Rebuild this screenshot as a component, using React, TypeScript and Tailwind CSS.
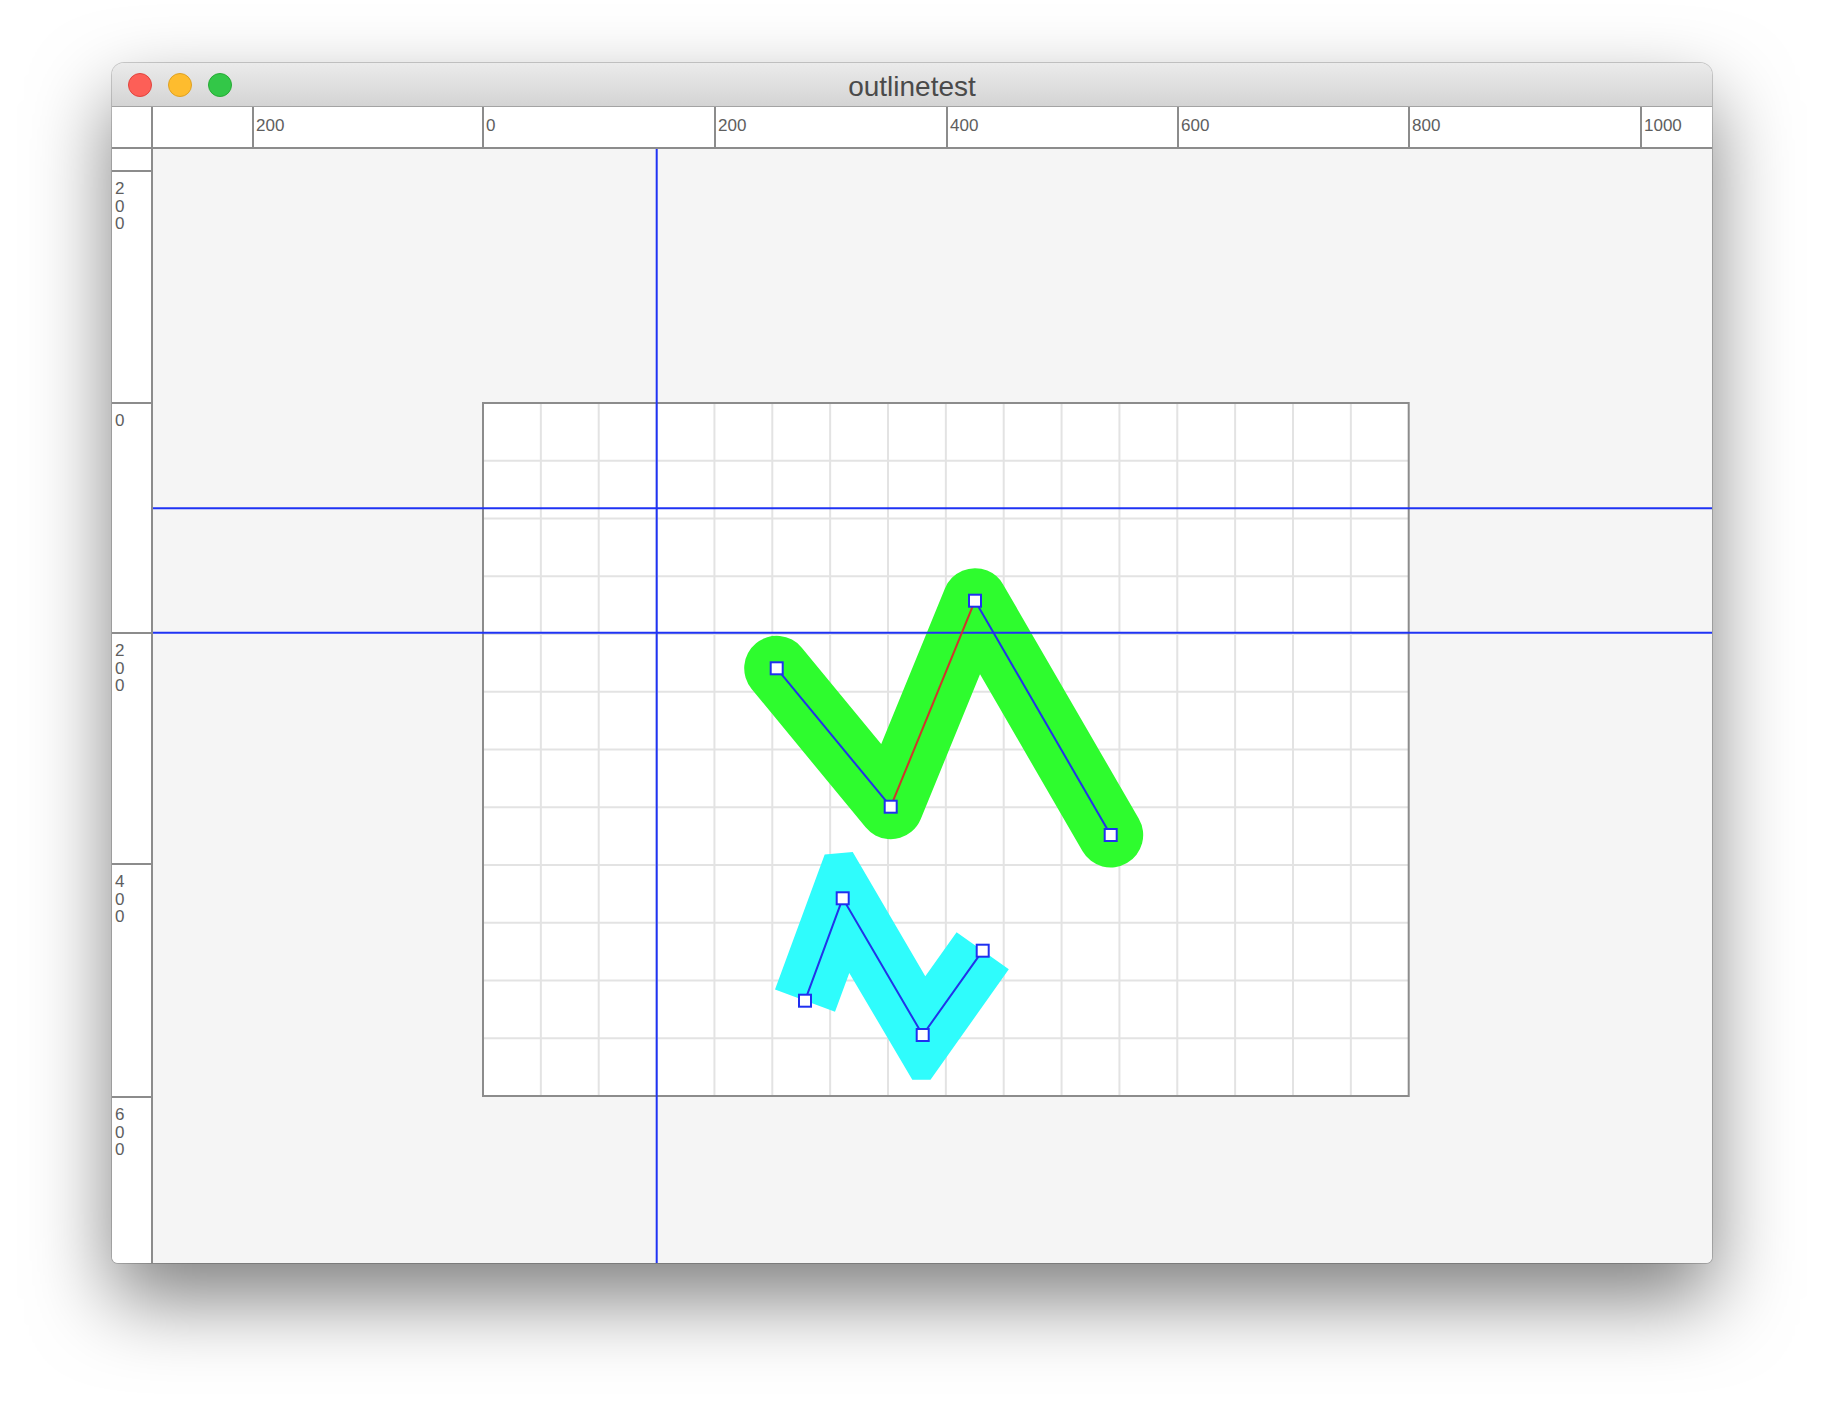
import React from "react";

const hCells = [
  { w: 230, label: "200" },
  { w: 232, label: "0" },
  { w: 232, label: "200" },
  { w: 231, label: "400" },
  { w: 231, label: "600" },
  { w: 232, label: "800" },
];

const vCells = [
  { h: 232, label: "200" },
  { h: 230, label: "0" },
  { h: 231, label: "200" },
  { h: 233, label: "400" },
];

const green: [number, number][] = [
  [623.7, 519.3],
  [737.7, 657.7],
  [822, 451.7],
  [957.7, 686],
];

const cyan: [number, number][] = [
  [652, 851.7],
  [689.7, 749.3],
  [769.7, 886],
  [829.7, 801.7],
];

const cyanOutline: [number, number][] = [
  [622.0, 840.6],
  [671.7, 705.5],
  [699.7, 703.0],
  [772.3, 827.2],
  [803.6, 783.2],
  [855.8, 820.3],
  [777.5, 930.8],
  [759.3, 930.8],
  [696.3, 823.9],
  [682.0, 862.8],
];

const pts = (p: [number, number][]) => p.map((q) => q.join(",")).join(" ");

function Canvas() {
  const cx = 330;
  const cy = 254;
  const cw = 925.7;
  const ch = 693;
  const vlines = Array.from({ length: 15 }, (_, i) => cx + ((i + 1) * cw) / 16);
  const hlines = Array.from({ length: 11 }, (_, i) => cy + ((i + 1) * ch) / 12);
  const blue = "#1f33f4";
  return (
    <svg width="1559" height="1114" viewBox="0 0 1559 1114" className="block">
      <rect x={cx} y={cy} width={cw} height={ch} fill="#ffffff" />
      {vlines.map((x) => (
        <line key={"v" + x} x1={x} y1={cy} x2={x} y2={cy + ch} stroke="#e3e3e3" strokeWidth="2" />
      ))}
      {hlines.map((y) => (
        <line key={"h" + y} x1={cx} y1={y} x2={cx + cw} y2={y} stroke="#e3e3e3" strokeWidth="2" />
      ))}
      <rect x={cx} y={cy} width={cw} height={ch} fill="none" stroke="#8c8c8c" strokeWidth="2" />

      <polyline
        points={pts(green)}
        fill="none"
        stroke="#2efc2e"
        strokeWidth="65"
        strokeLinecap="round"
        strokeLinejoin="round"
      />
      <polygon points={pts(cyanOutline)} fill="#2ffcfc" />

      <line x1="503.7" y1="0" x2="503.7" y2="1114" stroke={blue} strokeWidth="2" />
      <line x1="0" y1="359.3" x2="1559" y2="359.3" stroke={blue} strokeWidth="2" />
      <line x1="0" y1="483.7" x2="1559" y2="483.7" stroke={blue} strokeWidth="2" />

      <line x1={green[0][0]} y1={green[0][1]} x2={green[1][0]} y2={green[1][1]} stroke="#2233e8" strokeWidth="2" />
      <line x1={green[1][0]} y1={green[1][1]} x2={green[2][0]} y2={green[2][1]} stroke="#d0352c" strokeWidth="2" />
      <line x1={green[2][0]} y1={green[2][1]} x2={green[3][0]} y2={green[3][1]} stroke="#2233e8" strokeWidth="2" />
      <polyline points={pts(cyan)} fill="none" stroke="#2233e8" strokeWidth="2" />

      {[...green, ...cyan].map(([x, y], i) => (
        <rect key={i} x={x - 6} y={y - 6} width="12" height="12" fill="#ffffff" stroke="#1f2ff0" strokeWidth="2" />
      ))}
    </svg>
  );
}

export default function App() {
  const font = { fontFamily: '"Liberation Sans", Arial, sans-serif' };
  return (
    <div className="w-full h-[1424px] bg-white flex justify-center pt-[63px]" style={font}>
      <div className="w-[1600px] h-[1200px] flex flex-col rounded-t-[12px] rounded-b-[6px] overflow-hidden bg-[#f5f5f5] shadow-[0_0_0_1px_rgba(0,0,0,0.18),0_36px_80px_rgba(0,0,0,0.5)]">
        {/* Title bar */}
        <div className="h-[44px] shrink-0 grid grid-cols-[1fr_auto_1fr] items-center px-[16px] bg-gradient-to-b from-[#ebebeb] to-[#d4d4d4] border-b border-[#a3a3a3]">
          <div className="flex items-center gap-[16px]">
            <div className="w-[24px] h-[24px] rounded-full bg-[#fd5f57] border border-[#e0443e]" />
            <div className="w-[24px] h-[24px] rounded-full bg-[#febc2e] border border-[#dea123]" />
            <div className="w-[24px] h-[24px] rounded-full bg-[#33c748] border border-[#27aa35]" />
          </div>
          <div className="text-[28px] leading-[30px] pt-[4px] text-[#4a4a4a]">outlinetest</div>
          <div />
        </div>

        {/* Horizontal ruler */}
        <div className="h-[42px] shrink-0 flex bg-white border-b-2 border-[#8c8c8c]">
          <div className="w-[41px] shrink-0 border-r-2 border-[#8c8c8c]" />
          <div className="w-[99px] shrink-0" />
          {hCells.map((c, i) => (
            <div
              key={i}
              className="shrink-0 border-l-2 border-[#8c8c8c] pl-[2px] pt-[10px] text-[17px] leading-[17px] text-[#5e5e5e]"
              style={{ width: c.w }}
            >
              {c.label}
            </div>
          ))}
          <div className="flex-1 border-l-2 border-[#8c8c8c] pl-[2px] pt-[10px] text-[17px] leading-[17px] text-[#5e5e5e]">
            1000
          </div>
        </div>

        {/* Body */}
        <div className="flex-1 flex min-h-0">
          <div className="w-[41px] shrink-0 flex flex-col bg-white border-r-2 border-[#8c8c8c]">
            <div className="h-[21px] shrink-0" />
            {vCells.map((c, i) => (
              <div
                key={i}
                className="shrink-0 border-t-2 border-[#8c8c8c] pl-[3px] pt-[8px] text-[17px] leading-[17.5px] text-[#5e5e5e]"
                style={{ height: c.h }}
              >
                {c.label.split("").map((ch, j) => (
                  <div key={j}>{ch}</div>
                ))}
              </div>
            ))}
            <div className="flex-1 border-t-2 border-[#8c8c8c] pl-[3px] pt-[8px] text-[17px] leading-[17.5px] text-[#5e5e5e]">
              {"600".split("").map((ch, j) => (
                <div key={j}>{ch}</div>
              ))}
            </div>
          </div>
          <div className="flex-1 bg-[#f5f5f5] overflow-hidden">
            <Canvas />
          </div>
        </div>
      </div>
    </div>
  );
}
